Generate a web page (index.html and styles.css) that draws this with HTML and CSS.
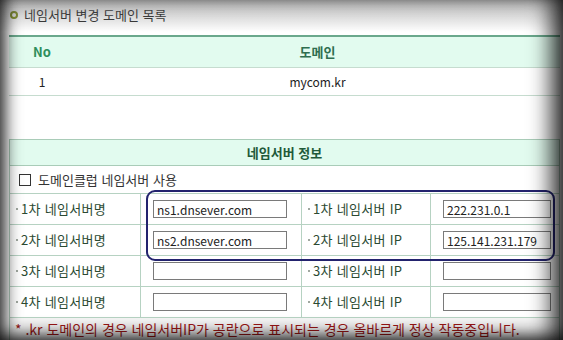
FILE: index.html
```html
<!DOCTYPE html>
<html lang="ko">
<head>
    <meta charset="UTF-8">
    <title>네임서버 변경</title>
    <link rel="stylesheet" href="styles.css">
</head>
<body>
    <div class="page">
        <h2 class="title"><span class="dot"></span>네임서버 변경 도메인 목록</h2>

        <table class="list">
            <thead>
                <tr>
                    <th class="no">No</th>
                    <th>도메인</th>
                </tr>
            </thead>
            <tbody>
                <tr>
                    <td class="no">1</td>
                    <td>mycom.kr</td>
                </tr>
            </tbody>
        </table>

        <div class="ns-wrap">
            <table class="ns">
                <colgroup>
                    <col class="c1">
                    <col class="c2">
                    <col class="c3">
                    <col>
                </colgroup>
                <tr>
                    <th colspan="4">네임서버 정보</th>
                </tr>
                <tr>
                    <td colspan="4" class="check"><span class="box"></span>도메인클럽 네임서버 사용</td>
                </tr>
                <tr>
                    <td class="label">1차 네임서버명</td>
                    <td><input type="text" class="host" value="ns1.dnsever.com"></td>
                    <td class="label">1차 네임서버 IP</td>
                    <td><input type="text" class="ip" value="222.231.0.1"></td>
                </tr>
                <tr>
                    <td class="label">2차 네임서버명</td>
                    <td><input type="text" class="host" value="ns2.dnsever.com"></td>
                    <td class="label">2차 네임서버 IP</td>
                    <td><input type="text" class="ip" value="125.141.231.179"></td>
                </tr>
                <tr>
                    <td class="label">3차 네임서버명</td>
                    <td><input type="text" class="host"></td>
                    <td class="label">3차 네임서버 IP</td>
                    <td><input type="text" class="ip"></td>
                </tr>
                <tr>
                    <td class="label">4차 네임서버명</td>
                    <td><input type="text" class="host"></td>
                    <td class="label">4차 네임서버 IP</td>
                    <td><input type="text" class="ip"></td>
                </tr>
                <tr>
                    <td colspan="4" class="note">* .kr 도메인의 경우 네임서버IP가 공란으로 표시되는 경우 올바르게 정상 작동중입니다.</td>
                </tr>
            </table>
            <!-- highlight drawn over the first two rows -->
            <div class="mark"></div>
        </div>
    </div>
</body>
</html>
```

FILE: styles.css
```css
/* General styling */
body {
    margin: 0;
    padding: 0;
    background: #ffffff;
    font-family: "Noto Sans CJK KR", "Noto Sans", sans-serif;
    font-size: 12px;
    line-height: 14px;
    color: #333;
    overflow: hidden;
}

/* dark photo edges */
body::after {
    content: "";
    position: fixed;
    inset: 0;
    pointer-events: none;
    background: linear-gradient(180deg, rgba(90, 90, 90, 0.45), rgba(255, 255, 255, 0) 32px);
    box-shadow: inset 14px 0 16px -8px rgba(0, 0, 0, 0.75),
                inset -22px 0 22px -10px rgba(0, 0, 0, 0.8),
                inset 0 -12px 16px -6px rgba(0, 0, 0, 0.7);
}

.page {
    width: 551px;
    padding: 5px 0 0 9px;
}

.title {
    display: flex;
    align-items: center;
    margin: 0 0 11px 0;
    font-size: 13px;
    line-height: 19px;
    font-weight: normal;
    color: #333;
    height: 19px;
}

.dot {
    width: 4px;
    height: 4px;
    border: 2px solid #8a9a2a;
    border-radius: 50%;
    margin: 0 6px 0 1px;
}

table {
    width: 100%;
    border-collapse: collapse;
}

/* domain list */
.list {
    border-top: 2px solid #6aa88c;
    margin-bottom: 43px;
}

.list th {
    height: 30px;
    padding: 0;
    background: #e2fbef;
    color: #2f6e50;
    font-size: 13px;
    font-weight: bold;
    border-bottom: 1px solid #c6dccf;
}

.list th.no {
    color: #2e8e5c;
}

.list td {
    height: 27px;
    padding: 0;
    text-align: center;
    color: #222;
    border-bottom: 1px solid #c6dccf;
}

.list .no {
    width: 66px;
}

/* name server info */
.ns-wrap {
    position: relative;
}

.ns {
    border: 1px solid #b6d2c2;
    table-layout: fixed;
}

.ns .c1 { width: 131px; }
.ns .c2 { width: 161px; }
.ns .c3 { width: 129px; }

.ns td {
    border: 1px solid #b6d2c2;
    height: 30px;
    padding: 0;
}

.ns th {
    height: 25px;
    padding: 0;
    background: #e2fbef;
    color: #1f5a3a;
    font-size: 13px;
    font-weight: bold;
    border: 1px solid #a9ccb8;
}

.ns td.check {
    height: 27px;
    padding-left: 9px;
    font-size: 13px;
    color: #333;
}

.box {
    display: inline-block;
    width: 10px;
    height: 10px;
    border: 1px solid #333;
    vertical-align: -1px;
    margin-right: 7px;
}

.ns td.label {
    padding-left: 6px;
    font-size: 13px;
    letter-spacing: 0.3px;
    color: #2b4a32;
}

.ns td.label::before {
    content: "";
    display: inline-block;
    width: 2px;
    height: 2px;
    background: #a0a8a0;
    vertical-align: 4px;
    margin-right: 3px;
}

input[type="text"] {
    box-sizing: border-box;
    height: 18px;
    border: 1px solid #7a7a7a;
    padding: 0 3px;
    font-family: "Noto Sans CJK KR", sans-serif;
    font-size: 12px;
    color: #222;
    display: block;
}

.host {
    width: 134px;
    margin-left: 12px;
}

.ip {
    width: 108px;
    margin-left: 12px;
}

.ns td.note {
    height: 22px;
    padding-left: 5px;
    font-size: 14px;
    color: #9c1616;
    background: #f4f4f4;
    vertical-align: top;
    padding-top: 4px;
}

.mark {
    position: absolute;
    left: 137px;
    top: 51px;
    width: 405px;
    height: 67px;
    border: 2px solid #23236e;
    border-radius: 9px;
    pointer-events: none;
}
```
